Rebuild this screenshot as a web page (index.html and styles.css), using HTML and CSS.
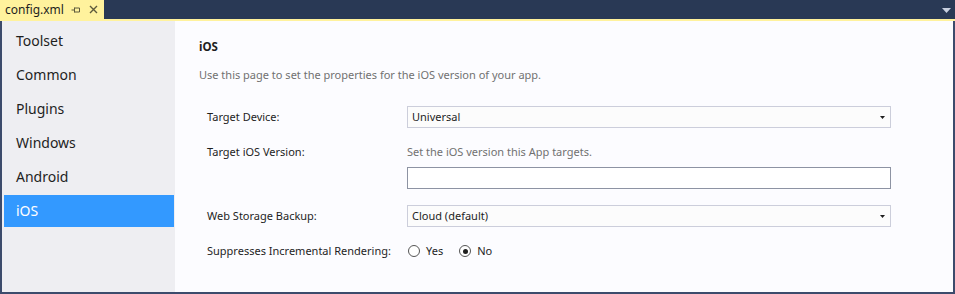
FILE: index.html
```html
<!DOCTYPE html>
<html>
<head>
<meta charset="utf-8">
<link rel="stylesheet" href="styles.css">
</head>
<body>
<div class="window">
  <div class="tabbar">
    <div class="tab">
      <span class="tab-title">config.xml</span>
      <svg class="pin" width="10" height="10" viewBox="0 0 10 10"><path d="M0.5 5H3.5M3.5 2.5V7.5M3.5 3H8.5V7H3.5" fill="none" stroke="#5d5a3c" stroke-width="1"/></svg>
      <svg class="close" width="9" height="9" viewBox="0 0 9 9"><path d="M1 1L8 8M8 1L1 8" stroke="#5d5a3c" stroke-width="1.4"/></svg>
    </div>
    <div class="spacer"></div>
    <svg class="menu-arrow" width="9" height="5" viewBox="0 0 9 5"><path d="M0 0H9L4.5 5Z" fill="#c8d0e0"/></svg>
  </div>
  <div class="accent"></div>
  <div class="main">
    <nav class="sidebar">
      <div class="nav-item">Toolset</div>
      <div class="nav-item">Common</div>
      <div class="nav-item">Plugins</div>
      <div class="nav-item">Windows</div>
      <div class="nav-item">Android</div>
      <div class="nav-item selected">iOS</div>
    </nav>
    <section class="content">
      <h1 class="title">iOS</h1>
      <p class="desc">Use this page to set the properties for the iOS version of your app.</p>
      <div class="form">
        <div class="row">
          <label class="label">Target Device:</label>
          <div class="select"><span>Universal</span><svg width="5" height="3" viewBox="0 0 5 3"><path d="M0 0H5L2.5 3Z" fill="#1e1e1e"/></svg></div>
        </div>
        <div class="row tall">
          <label class="label">Target iOS Version:</label>
          <div class="field">
            <div class="hint">Set the iOS version this App targets.</div>
            <div class="input"></div>
          </div>
        </div>
        <div class="row">
          <label class="label">Web Storage Backup:</label>
          <div class="select"><span>Cloud (default)</span><svg width="5" height="3" viewBox="0 0 5 3"><path d="M0 0H5L2.5 3Z" fill="#1e1e1e"/></svg></div>
        </div>
        <div class="row last">
          <label class="label">Suppresses Incremental Rendering:</label>
          <div class="radios">
            <span class="radio"><span class="dot"></span>Yes</span>
            <span class="radio checked"><span class="dot"></span>No</span>
          </div>
        </div>
      </div>
    </section>
  </div>
</div>
</body>
</html>
```
FILE: styles.css
```css
* { box-sizing: border-box; }
html, body { margin: 0; padding: 0; }
body {
  width: 955px;
  height: 294px;
  overflow: hidden;
  font-family: "Noto Sans", "Open Sans", sans-serif;
  background: #293955;
}
.window {
  display: flex;
  flex-direction: column;
  height: 294px;
}
.tabbar {
  height: 19px;
  background: #293955;
  display: flex;
  align-items: center;
}
.tab {
  height: 19px;
  width: 104px;
  background: #fff29d;
  display: flex;
  align-items: center;
  padding-left: 5px;
}
.tab-title {
  font-size: 12px;
  color: #1e1e1e;
  line-height: 19px;
  width: 66px;
}
.pin { margin-right: 8px; }
.spacer { flex: 1; }
.menu-arrow { margin-right: 4px; margin-top: 2px; }
.accent {
  height: 2px;
  background: #fff29d;
}
.main {
  flex: 1;
  display: flex;
  border-left: 2px solid #3c4b6c;
  border-right: 2px solid #3c4b6c;
  border-bottom: 2px solid #3c4b6c;
  background: #fcfcff;
}
.sidebar {
  width: 173px;
  background: #eeeef2;
  padding-top: 4px;
  display: flex;
  flex-direction: column;
  gap: 2px;
}
.nav-item {
  height: 32px;
  margin-left: 2px;
  margin-right: 1px;
  padding-left: 12px;
  line-height: 32px;
  font-size: 14px;
  color: #1e1e1e;
}
.nav-item.selected {
  background: #3399ff;
  color: #ffffff;
}
.content {
  flex: 1;
  padding: 18px 0 0 24px;
  font-size: 11px;
  color: #1e1e1e;
}
.title {
  margin: 0;
  font-size: 11.5px;
  font-weight: bold;
  line-height: 16px;
}
.desc {
  margin: 12px 0 0;
  line-height: 16px;
  color: #717171;
}
.form {
  margin: 23px 0 0 8px;
  display: flex;
  flex-direction: column;
  gap: 16px;
}
.row {
  display: grid;
  grid-template-columns: 200px 484px;
  align-items: center;
  min-height: 22px;
}
.row.tall { align-items: start; }
.row.tall .label { line-height: 16px; }
.row.last { margin-top: -3px; }
.label { line-height: 22px; white-space: nowrap; }
.select {
  height: 22px;
  border: 1px solid #cccedb;
  background: #fcfcfc;
  display: flex;
  align-items: center;
  justify-content: space-between;
  padding: 0 5px 0 4px;
}
.select span { line-height: 20px; }
.field { display: flex; flex-direction: column; gap: 7px; }
.hint { line-height: 16px; color: #717171; }
.input {
  height: 22px;
  border: 1px solid #8d93a3;
  background: #ffffff;
}
.radios {
  display: flex;
  align-items: center;
  gap: 16px;
  padding-left: 1px;
}
.radio {
  display: flex;
  align-items: center;
  gap: 6px;
  line-height: 22px;
}
.dot {
  width: 12px;
  height: 12px;
  border: 1px solid #555555;
  border-radius: 50%;
  background: #ffffff;
  position: relative;
}
.radio.checked .dot::after {
  content: "";
  position: absolute;
  left: 2.5px;
  top: 2.5px;
  width: 5px;
  height: 5px;
  border-radius: 50%;
  background: #1e1e1e;
}
```
